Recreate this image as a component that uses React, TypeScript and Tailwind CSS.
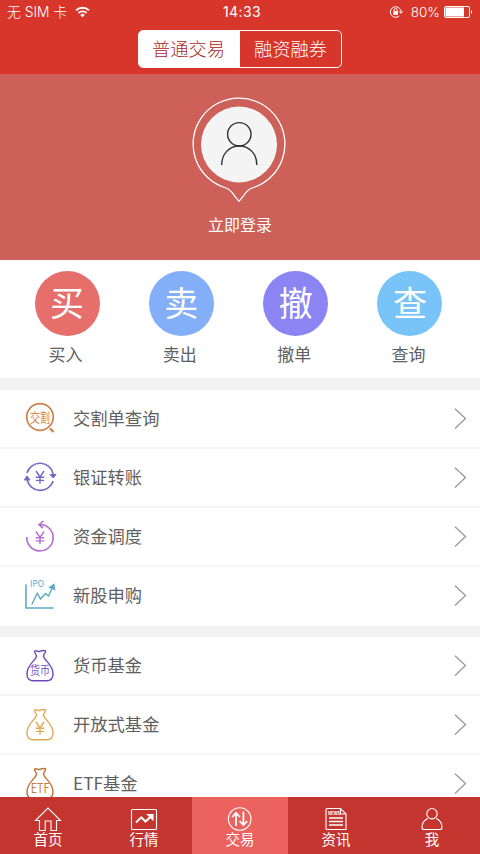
import React from 'react';

type IconProps = { children: React.ReactNode; color: string };

const FONT = "font-['Noto_Sans_CJK_SC',sans-serif]";

function RowIcon({ children, color }: IconProps) {
  return (
    <svg width="34" height="36" viewBox="0 0 34 36" fill="none" stroke={color} strokeWidth="1.4" className="block shrink-0">
      {children}
    </svg>
  );
}

function Glyph({ x, y, size, color, width, children }: { x: number; y: number; size: number; color: string; width?: number; children: string }) {
  return (
    <text x={x} y={y} fontSize={size} fill={color} stroke="none" textAnchor="middle" textLength={width} lengthAdjust="spacingAndGlyphs">
      {children}
    </text>
  );
}

function Yen({ y }: { y: number }) {
  return <path d={`M13 ${y - 6}L17 ${y}L21 ${y - 6}M17 ${y}V${y + 6.5}M12.8 ${y + 0.3}H21.2M12.8 ${y + 3.4}H21.2`} strokeWidth="1.4" />;
}

const BAG = 'M11.7 3C13.6 1.9 14.5 4 16.4 3.5C18 3 20 1.7 22.6 2.9C23.5 3.6 20.6 6 20.5 8.4C21.2 12.4 30 16.4 30 25.9C30 30.9 27.5 32.7 23.5 32.7H10.5C6.5 32.7 4 30.9 4 25.9C4 16.4 12.8 12.4 13.5 8.4C13.4 6 10.6 4 11.7 3Z';

const trades = [
  { glyph: '买', label: '买入', bg: 'bg-[#e66f6c]' },
  { glyph: '卖', label: '卖出', bg: 'bg-[#83aef8]' },
  { glyph: '撤', label: '撤单', bg: 'bg-[#8b85f3]' },
  { glyph: '查', label: '查询', bg: 'bg-[#78c4f8]' },
];

const services = [
  {
    label: '交割单查询',
    icon: (
      <RowIcon color="#cd8350">
        <circle cx="17" cy="16" r="13.3" strokeWidth="1.7" />
        <path d="M27 27.5L30.5 31" strokeWidth="2.4" />
        <Glyph x={17} y={20.8} size={13} width={20} color="#cd8350">交割</Glyph>
      </RowIcon>
    ),
  },
  {
    label: '银证转账',
    icon: (
      <RowIcon color="#7468c4">
        <path d="M4 13A13.5 13.5 0 0 1 30.2 14M30.2 21A13.5 13.5 0 0 1 4.2 20" strokeWidth="1.6" />
        <path d="M27 14.5H33L30.3 18ZM1.3 20H7L4 16Z" fill="#7468c4" strokeWidth="1" />
        <Yen y={17} />
      </RowIcon>
    ),
  },
  {
    label: '资金调度',
    icon: (
      <RowIcon color="#b56ed0">
        <path d="M3.8 18A13.2 13.2 0 1 0 17 5.5M20.5 2L16 5.7L20 9.2" strokeWidth="1.6" />
        <Yen y={18.5} />
      </RowIcon>
    ),
  },
  {
    label: '新股申购',
    icon: (
      <RowIcon color="#5cabc7">
        <path d="M3 6.5V30H30.5" strokeWidth="1.6" />
        <path d="M8.8 26.5L14.2 15.2L17.5 21L22.5 15.5L25.5 18L30 8" />
        <path d="M26.7 9.4L30.8 6.4L31.6 11.4Z" fill="#5cabc7" />
        <Glyph x={14} y={8.8} size={8.5} width={14} color="#5cabc7">IPO</Glyph>
      </RowIcon>
    ),
  },
];

const funds = [
  {
    label: '货币基金',
    icon: (
      <RowIcon color="#6c48ba">
        <path d={BAG} />
        <Glyph x={17} y={26.5} size={12} width={20} color="#7358c5">货币</Glyph>
      </RowIcon>
    ),
  },
  {
    label: '开放式基金',
    icon: (
      <RowIcon color="#deaa55">
        <path d={BAG} />
        <Yen y={21} />
      </RowIcon>
    ),
  },
  {
    label: 'ETF基金',
    icon: (
      <RowIcon color="#bd7136">
        <path d={BAG} />
        <Glyph x={17} y={26.5} size={13.5} width={18.5} color="#c67b3d">ETF</Glyph>
      </RowIcon>
    ),
  },
];

function Row({ label, icon }: { label: string; icon: React.ReactNode }) {
  return (
    <div className="flex h-[59px] shrink-0 items-center border-b-2 border-[#f5f5f5] bg-white pr-[13px] pl-[23px] last:border-white">
      {icon}
      <span className="ml-4 flex-1 pb-0.5 text-[17.3px] leading-6 text-[#606060]">{label}</span>
      <svg width="13" height="22" viewBox="0 0 13 22" fill="none" stroke="#999" strokeWidth="1.3">
        <path d="M1 .8L11.5 10.6L1 20.4" />
      </svg>
    </div>
  );
}

const tabs = [
  {
    label: '首页',
    icon: <path d="M2.5 15.5L15 3L27.5 15.5H23.5V25.5H18V16H12.2V25.5H6.5V15.5Z" />,
  },
  {
    label: '行情',
    icon: (
      <>
        <rect x="2.5" y="4.5" width="25" height="20" rx="1" />
        <path d="M7 17.5L12.3 12.3L16.5 16.5L22.5 11" strokeWidth="2" />
        <path d="M18.5 9.5H24V15Z" fill="white" />
      </>
    ),
  },
  {
    label: '交易',
    icon: (
      <>
        <circle cx="14.7" cy="14" r="11.3" />
        <path d="M11 21V8.5M7.2 12L11 7.8L14.8 12M18.4 6.5V19.5M14.6 16L18.4 20.2L22.2 16" strokeWidth="1.8" />
      </>
    ),
  },
  {
    label: '资讯',
    icon: (
      <>
        <path d="M6 3.5H19.5L25 9V24.5H6Q5 24.5 5 23.5V4.5Q5 3.5 6 3.5Z" />
        <path d="M19.5 3.5V9H25" />
        <path d="M8 13H22M8 16.5H22M8 20H22" strokeWidth="1.6" />
        <text x="7" y="10" fontSize="5" fontWeight="bold" fill="white" stroke="none" textLength="12" lengthAdjust="spacingAndGlyphs">NEWS</text>
      </>
    ),
  },
  {
    label: '我',
    icon: (
      <>
        <circle cx="15" cy="8.7" r="5.2" />
        <path d="M10.8 13.4C7 15 5 18 5 22.5C5 24 5.5 24.5 7 24.5H23C24.5 24.5 25 24 25 22.5C25 18 23 15 19.2 13.4" />
      </>
    ),
  },
];

export default function App() {
  return (
    <div className={`flex h-[854px] w-[480px] flex-col overflow-hidden bg-[#f3f3f3] ${FONT}`}>
      <header className="h-[74px] shrink-0 bg-[#d8362a] text-white">
        <div className="grid h-6 grid-cols-3 items-center px-[7px] text-sm leading-6">
          <div className="flex items-center gap-[8px]">
            <span className="font-['Inter','Noto_Sans_CJK_SC',sans-serif] text-[13.8px] font-light whitespace-pre">无 SIM 卡</span>
            <svg width="15" height="12" viewBox="0 0 15 12" fill="none" stroke="white" strokeWidth="1.8">
              <path d="M1 4.4A9.3 9.3 0 0 1 14 4.4M3.4 7A6 6 0 0 1 11.6 7" />
              <path d="M5.2 8.9A3.3 3.3 0 0 1 9.8 8.9L7.5 11.3Z" fill="white" stroke="none" />
            </svg>
          </div>
          <span className="pl-[4px] text-center font-['Inter',sans-serif] text-[14px] tracking-[0.4px]">14:33</span>
          <div className="flex items-center justify-end">
            <svg width="14" height="14" viewBox="0 0 14 14" fill="none" stroke="white" strokeWidth="1">
              <path d="M12 7A5.3 5.3 0 1 0 10.2 11M10.3 6.4L12 8.4L13.6 6.4" />
              <rect x="4.4" y="6.2" width="4.6" height="3.6" fill="white" stroke="none" />
              <path d="M5.2 6.5V5A1.5 1.5 0 0 1 8.2 5V6.5" />
            </svg>
            <span className="ml-[8px] font-['Inter',sans-serif] text-[13.5px] font-light">80%</span>
            <svg width="29" height="12" viewBox="0 0 29 12" fill="none" className="ml-1">
              <rect x=".5" y=".5" width="25" height="11" rx="1.5" stroke="white" />
              <rect x="1.5" y="1.5" width="18.5" height="9" fill="white" />
              <path d="M27 4C28.5 5 28.5 7 27 8Z" fill="white" />
            </svg>
          </div>
        </div>
        <div className="mx-auto mt-1.5 flex h-[38px] w-[204px] overflow-hidden rounded-[5px] border border-white text-[18.3px] leading-[35px]">
          <span className="w-[101px] bg-white pr-0.5 text-center font-light text-[#a8281f]">普通交易</span>
          <span className="flex-1 text-center font-light">融资融券</span>
        </div>
      </header>

      <section className="flex h-[186px] shrink-0 flex-col items-center bg-[#cd6059] pt-[23px] text-white">
        <svg width="96" height="108" viewBox="0 0 96 108" fill="none" className="mr-[3px] block">
          <path d="M35 91A45.9 45.9 0 1 1 61 91C56.5 92.5 54.5 96 52.5 98.8L48 104.3L43.5 98.8C41.5 96 39.5 92.5 35 91Z" stroke="white" strokeWidth="1.3" />
          <circle cx="48" cy="47.5" r="38" fill="#f4f4f4" />
          <g stroke="#333" strokeWidth="1.4">
            <circle cx="48.3" cy="37.3" r="11.7" />
            <path d="M30.7 68C30.7 57 38 49 48.3 49S65.8 57 65.8 68" />
          </g>
        </svg>
        <span className="mt-[7px] text-[16px] leading-6">立即登录</span>
      </section>

      <section className="flex h-[118px] shrink-0 justify-between bg-white pt-[11px] pr-[37.5px] pl-[34.5px]">
        {trades.map((t) => (
          <div key={t.label} className="flex w-[65px] flex-col items-center">
            <div className={`flex size-[65px] items-center justify-center rounded-full pb-1 text-[34px] leading-none text-white ${t.bg}`}>{t.glyph}</div>
            <span className="mt-1.5 mr-[3px] text-[17px] leading-6 text-[#606060]">{t.label}</span>
          </div>
        ))}
      </section>

      <main className="flex min-h-0 flex-1 flex-col overflow-hidden">
        <div className="mt-3 flex flex-col">
          {services.map((s) => (
            <Row key={s.label} {...s} />
          ))}
        </div>
        <div className="mt-[11px] flex flex-col">
          {funds.map((s) => (
            <Row key={s.label} {...s} />
          ))}
        </div>
      </main>

      <nav className="grid h-[57px] shrink-0 grid-cols-5 bg-[#c5352f] text-white">
        {tabs.map((t) => (
          <div key={t.label} className={t.label === '交易' ? 'flex flex-col items-center bg-[#ec625e] pt-2' : 'flex flex-col items-center pt-2'}>
            <svg width="30" height="28" viewBox="0 0 30 28" fill="none" stroke="white" strokeWidth="1.1" className="block shrink-0">
              {t.icon}
            </svg>
            <span className="-mt-[3px] text-[14.5px] leading-[18px]">{t.label}</span>
          </div>
        ))}
      </nav>
    </div>
  );
}
